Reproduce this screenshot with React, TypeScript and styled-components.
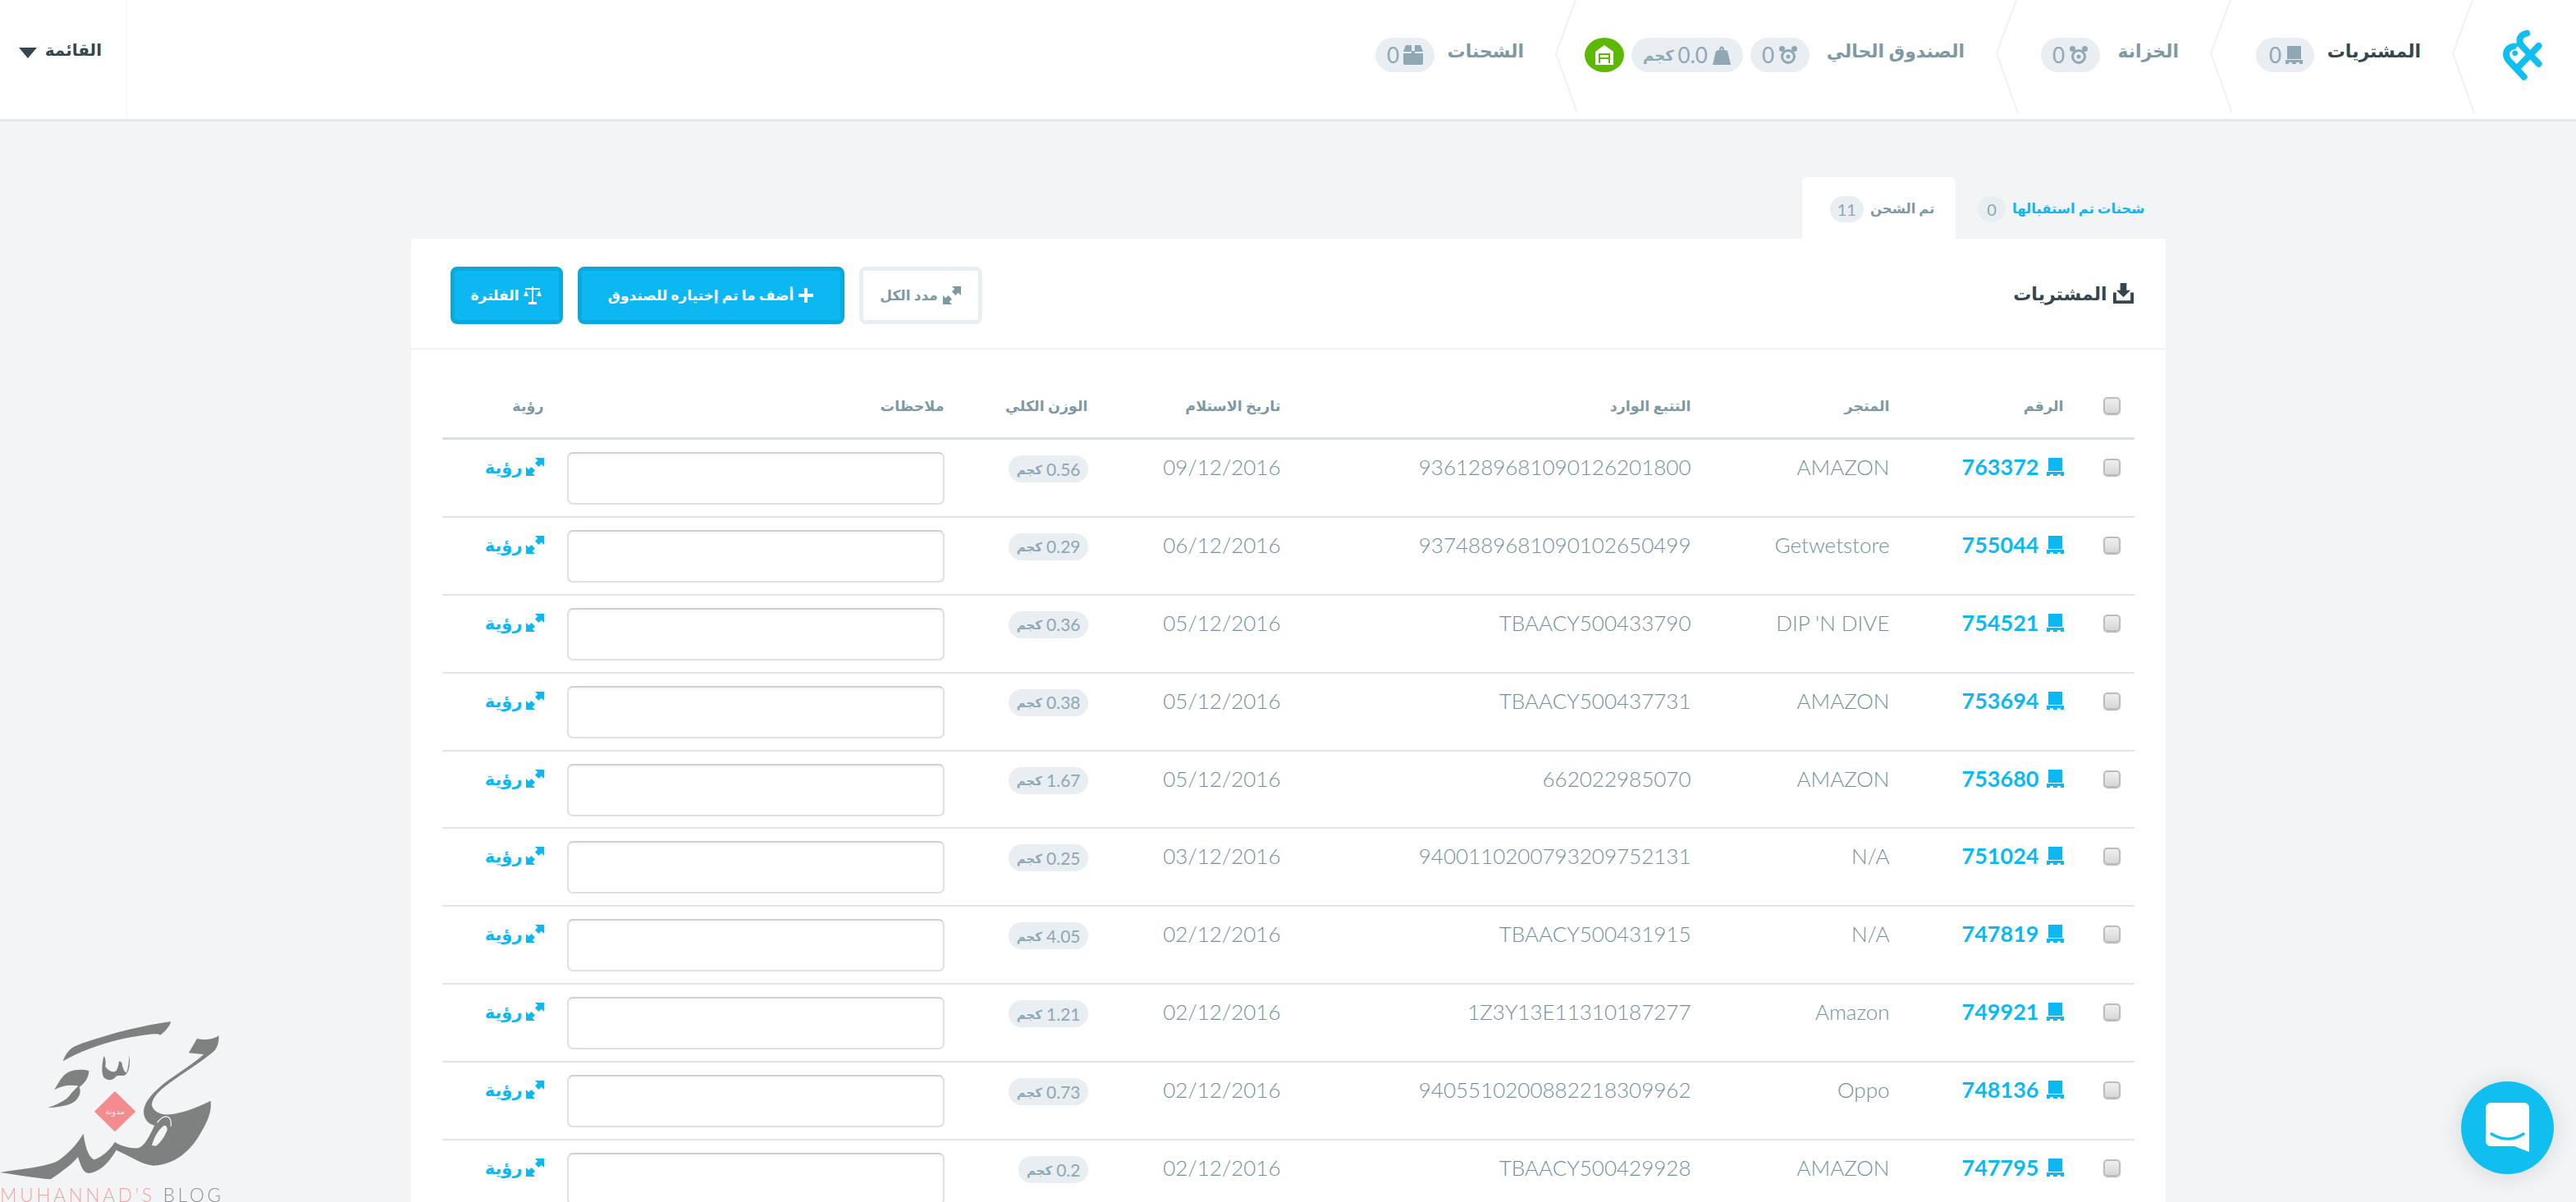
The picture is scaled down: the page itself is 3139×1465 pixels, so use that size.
import React from "react";
import styled, { createGlobalStyle } from "styled-components";

const Global = createGlobalStyle`
  html, body { margin: 0; padding: 0; height: 100%; overflow: hidden; background: #f2f4f6; }
  body { font-family: "Lato", "DejaVu Sans", sans-serif; color: #8fa3ac; }
  * { box-sizing: border-box; }
`;

const Page = styled.div`
  direction: rtl;
  width: 3139px;
  height: 1465px;
  overflow: hidden;
`;

const Header = styled.header`
  display: flex;
  height: 148px;
  background: #fff;
  border-bottom: 3px solid #e6e9ec;
`;

const LogoCell = styled.div`
  width: 150px;
  display: flex;
  align-items: center;
  justify-content: center;
  padding: 0 0 12px 18px;
  flex: none;
`;

const NavItem = styled.div<{ $w: number }>`
  position: relative;
  flex: none;
  width: ${(p) => p.$w}px;
  height: 145px;
  display: flex;
  align-items: flex-start;
  padding: 46px 39px 0 0;
`;

const Chevron = styled.svg`
  position: absolute;
  right: -28px;
  top: 0;
  width: 30px;
  height: 140px;
`;

const NavLabel = styled.span<{ $active?: boolean; $w: number }>`
  width: ${(p) => p.$w}px;
  flex: none;
  font-size: 22px;
  font-weight: 700;
  line-height: 32px;
  white-space: nowrap;
  color: ${(p) => (p.$active ? "#34464e" : "#7f99a3")};
`;

const Pills = styled.div`
  display: flex;
  gap: 9px;
  margin-right: 18px;
`;

const Pill = styled.span`
  height: 42px;
  min-width: 71px;
  padding: 0 14px;
  border-radius: 21px;
  background: #e8eef1;
  color: #8fa8b3;
  display: inline-flex;
  align-items: center;
  gap: 5px;
  font-size: 26px;
  white-space: nowrap;
  & small { font-size: 18px; font-weight: 700; }
`;

const GreenPill = styled.span`
  width: 48px;
  height: 42px;
  border-radius: 50%;
  background: #5cb900;
  display: inline-flex;
  align-items: center;
  justify-content: center;
`;

const Spacer = styled.div`
  flex: 1;
`;

const MenuCell = styled.div`
  flex: none;
  width: 155px;
  height: 143px;
  border-right: 2px solid #f6f7f8;
  display: flex;
  align-items: flex-start;
  gap: 10px;
  padding: 44px 29px 0 0;
  font-size: 20px;
  font-weight: 700;
  line-height: 32px;
  color: #34464e;
  white-space: nowrap;
`;

const Caret = styled.span`
  margin-top: 14px;
  width: 0;
  height: 0;
  border-left: 11px solid transparent;
  border-right: 11px solid transparent;
  border-top: 13px solid #34464e;
`;

const Main = styled.main`
  width: 2138px;
  margin: 68px auto 0;
`;

const Tabs = styled.div`
  display: flex;
  height: 75px;
  position: relative;
  z-index: 1;
`;

const Tab = styled.div<{ $active?: boolean; $w: number }>`
  width: ${(p) => p.$w}px;
  height: ${(p) => (p.$active ? 78 : 75)}px;
  padding: 23px 25px 0 0;
  display: flex;
  align-items: flex-start;
  gap: 8px;
  font-size: 16.5px;
  font-weight: 700;
  line-height: 30px;
  white-space: nowrap;
  border-radius: 6px 6px 0 0;
  background: ${(p) => (p.$active ? "#fff" : "transparent")};
  color: ${(p) => (p.$active ? "#7f99a3" : "#0db8f2")};
`;

const TabCount = styled.span`
  height: 32px;
  min-width: 34px;
  padding: 0 9px;
  border-radius: 16px;
  background: #e8eef1;
  color: #8fa8b3;
  font-size: 20px;
  font-weight: 400;
  line-height: 32px;
  text-align: center;
`;

const Card = styled.section`
  background: #fff;
  height: 1300px;
`;

const CardHead = styled.div`
  height: 135px;
  border-bottom: 2px solid #f1f3f5;
  display: flex;
  align-items: center;
  justify-content: space-between;
  padding: 0 38px 0 48px;
`;

const Title = styled.h2`
  margin: 0;
  display: flex;
  align-items: center;
  gap: 6px;
  font-size: 22px;
  font-weight: 700;
  color: #34464e;
  white-space: nowrap;
`;

const Actions = styled.div`
  display: flex;
  gap: 18px;
  margin-top: 4px;
`;

const Btn = styled.button<{ $w: number; $outline?: boolean }>`
  width: ${(p) => p.$w}px;
  height: 70px;
  border-radius: 8px;
  border: 5px solid ${(p) => (p.$outline ? "#e9eef1" : "#0ba8dc")};
  background: ${(p) => (p.$outline ? "#fff" : "#0db8f2")};
  color: ${(p) => (p.$outline ? "#7f99a3" : "#fff")};
  font-family: inherit;
  font-size: 17px;
  font-weight: 700;
  display: inline-flex;
  align-items: center;
  justify-content: center;
  gap: 6px;
  padding: 0;
  white-space: nowrap;
`;

const COLS = "86px 212px 242px 500px 235px 175px 488px 124px";

const Table = styled.div`
  margin: 0 38px;
  padding-top: 24px;
`;

const HeadRow = styled.div`
  display: grid;
  grid-template-columns: ${COLS};
  height: 86px;
  align-items: center;
  padding-top: 6px;
  border-bottom: 3px solid #dcdfe1;
  font-size: 17.5px;
  font-weight: 700;
  color: #7f99a3;
  white-space: nowrap;
`;

const Row = styled.div`
  display: grid;
  grid-template-columns: ${COLS};
  height: 94.9px;
  align-items: start;
  border-bottom: 2px solid #e2e4e5;
`;

const Cell = styled.div`
  padding-top: 13px;
  font-size: 26px;
  font-weight: 300;
  line-height: 40px;
  color: #73909b;
  white-space: nowrap;
  direction: rtl;
`;

const BoxCell = styled.div`
  display: flex;
  justify-content: flex-start;
  padding: 0 17px 0 0;
`;

const BoxCellRow = styled(BoxCell)`
  padding-top: 23px;
`;

const Check = styled.input.attrs({ type: "checkbox" })`
  appearance: none;
  margin: 0;
  width: 21px;
  height: 21px;
  border: 2px solid #bbbcbd;
  border-radius: 5px;
  background: linear-gradient(#efefef, #d7d7d7);
  box-shadow: 0 1px 1px rgba(0, 0, 0, 0.3);
`;

const NumCell = styled(Cell)`
  color: #0db8f2;
  font-size: 27px;
  font-weight: 700;
  display: flex;
  align-items: center;
  gap: 9px;
`;

const WeightPill = styled.span`
  display: inline-flex;
  align-items: center;
  gap: 5px;
  height: 33px;
  margin-top: 6px;
  padding: 0 9px 0 10px;
  border-radius: 16px;
  background: #e8eef1;
  color: #8fa8b3;
  font-size: 21px;
  font-weight: 400;
  & small { font-size: 15px; font-weight: 700; }
`;

const NoteInput = styled.input`
  display: block;
  width: 460px;
  height: 64px;
  margin-top: 15px;
  border: 2px solid #e0e0e0;
  border-top-color: #d0d0d0;
  border-radius: 7px;
  background: #fff;
  box-shadow: inset 0 2px 3px rgba(0, 0, 0, 0.04);
`;

const ViewLink = styled(Cell)`
  color: #0db8f2;
  font-size: 21px;
  font-weight: 700;
  display: flex;
  align-items: center;
  gap: 4px;
`;

const Watermark = styled.div`
  position: fixed;
  left: 0;
  bottom: 0;
  width: 300px;
  height: 245px;
  direction: ltr;
`;

const WatermarkText = styled.div`
  position: absolute;
  left: 0;
  top: 228px;
  font-family: "Lato", sans-serif;
  font-weight: 300;
  font-size: 22.5px;
  line-height: 17px;
  letter-spacing: 3.8px;
  color: #f6a0a4;
  white-space: nowrap;
  & b { font-weight: 300; color: #8f9293; }
`;

const DiamondText = styled.text`
  font-family: "DejaVu Sans", sans-serif;
  font-size: 30px;
  fill: #fff;
`;

const Chat = styled.div`
  position: fixed;
  left: 2999px;
  top: 1318px;
  width: 113px;
  height: 113px;
  border-radius: 50%;
  background: #10bff0;
  box-shadow: 0 2px 30px rgba(0, 0, 0, 0.12);
  display: flex;
  align-items: center;
  justify-content: center;
`;

const ChevronLine = () => (
  <Chevron viewBox="0 0 30 140">
    <path d="M26 0 L2 65 L28 138" fill="none" stroke="#edf2f3" strokeWidth="2" />
  </Chevron>
);

const C = "currentColor";
const CartIcon = () => (
  <svg width="21" height="22" viewBox="0 0 21 22" fill={C}>
    <path d="M2 0h17v16H2zM0 17h21v5h-4v-2h-4v2H8v-2H4v2H0z" />
  </svg>
);
const BearIcon = () => (
  <svg width="24" height="24" viewBox="0 0 24 24" fill="none" stroke={C}>
    <circle cx="12" cy="14" r="7.5" strokeWidth="3" />
    <circle cx="12" cy="14" r="2.5" fill={C} stroke="none" />
    <circle cx="4.5" cy="4.5" r="3.5" fill={C} stroke="none" />
    <circle cx="19.5" cy="4.5" r="3.5" fill={C} stroke="none" />
  </svg>
);
const WeightIcon = () => (
  <svg width="24" height="26" viewBox="0 0 24 26" fill={C}>
    <path d="M9 7 C9 1 15 1 15 7 L19 8 L23 25 H1 L5 8 Z M11 7 H13 C13 4.5 11 4.5 11 7Z" fillRule="evenodd" />
  </svg>
);
const BoxIcon = () => (
  <svg width="24" height="24" viewBox="0 0 24 24" fill={C}>
    <path d="M3 0h7v8H0zM14 0h7l3 8H14zM0 10h10V7h4v3h10v12a2 2 0 0 1-2 2H2a2 2 0 0 1-2-2z" />
  </svg>
);
const HouseIcon = () => (
  <svg width="22" height="24" viewBox="0 0 22 24" fill="#fff">
    <path d="M11 0 L22 8 V24 H0 V8Z M4 10 V22 H6 V17 H16 V22 H18 V10Z M6 12 H16 V15 H6Z" fillRule="evenodd" />
  </svg>
);
const ExpandIcon = () => (
  <svg width="22" height="22" viewBox="0 0 20 20" fill={C}>
    <path d="M10 0h10v10l-3-3-3 3-4-4 3-3zM0 10l3 3 3-3 4 4-3 3 3 3H0z" />
  </svg>
);
const PlusIcon = () => (
  <svg width="18" height="18" viewBox="0 0 18 18" fill="#fff">
    <path d="M7 0h4v7h7v4h-7v7H7v-7H0V7h7z" />
  </svg>
);
const ScaleIcon = () => (
  <svg width="22" height="22" viewBox="0 0 22 22" fill="#fff">
    <path d="M10 0h2v2h8v2h-8v15h4v3H6v-3h4V4H2V2h8z" />
    <path d="M3 5 L6 12 H0Z M19 5 L22 12 H16Z" />
  </svg>
);
const DownloadIcon = () => (
  <svg width="27" height="25" viewBox="0 0 28 26" fill="#34464e">
    <path d="M10 0h8v9h5l-9 9-9-9h5z" />
    <path d="M1 12h4v10h18V12h4v14H1z" />
  </svg>
);

const rows = [
  ["763372", "AMAZON", "9361289681090126201800", "09/12/2016", "0.56"],
  ["755044", "Getwetstore", "9374889681090102650499", "06/12/2016", "0.29"],
  ["754521", "DIP 'N DIVE", "TBAACY500433790", "05/12/2016", "0.36"],
  ["753694", "AMAZON", "TBAACY500437731", "05/12/2016", "0.38"],
  ["753680", "AMAZON", "662022985070", "05/12/2016", "1.67"],
  ["751024", "N/A", "9400110200793209752131", "03/12/2016", "0.25"],
  ["747819", "N/A", "TBAACY500431915", "02/12/2016", "4.05"],
  ["749921", "Amazon", "1Z3Y13E11310187277", "02/12/2016", "1.21"],
  ["748136", "Oppo", "9405510200882218309962", "02/12/2016", "0.73"],
  ["747795", "AMAZON", "TBAACY500429928", "02/12/2016", "0.2"],
];

export default function App() {
  return (
    <Page>
      <Global />
      <Header>
        <LogoCell>
          <svg width="60" height="73" viewBox="130 90 180 220" fill="none" stroke="#10bfef" strokeWidth="24" strokeLinecap="round">
            <path d="M238 122 C212 128 205 148 220 168 L282 234" />
            <path d="M282 168 L205 248" />
            <path d="M188 170 C162 176 155 200 172 222 L228 282" />
            <path d="M188 170 L212 160" strokeWidth="14" />
            <circle cx="195" cy="195" r="10" fill="#10bfef" stroke="none" />
          </svg>
        </LogoCell>
        <NavItem $w={295}>
          <ChevronLine />
          <NavLabel $active $w={112}>المشتريات</NavLabel>
          <Pills><Pill><CartIcon />0</Pill></Pills>
        </NavItem>
        <NavItem $w={261}>
          <ChevronLine />
          <NavLabel $w={78}>الخزانة</NavLabel>
          <Pills><Pill><BearIcon />0</Pill></Pills>
        </NavItem>
        <NavItem $w={537}>
          <ChevronLine />
          <NavLabel $w={171}>الصندوق الحالي</NavLabel>
          <Pills>
            <Pill><BearIcon />0</Pill>
            <Pill><WeightIcon />0.0 <small>كجم</small></Pill>
            <GreenPill><HouseIcon /></GreenPill>
          </Pills>
        </NavItem>
        <NavItem $w={300}>
          <ChevronLine />
          <NavLabel $w={91}>الشحنات</NavLabel>
          <Pills><Pill><BoxIcon />0</Pill></Pills>
        </NavItem>
        <Spacer />
        <MenuCell>
          القائمة
          <Caret />
        </MenuCell>
      </Header>

      <Main>
        <Tabs>
          <Tab $w={256}>شحنات تم استقبالها<TabCount>0</TabCount></Tab>
          <Tab $active $w={187}>تم الشحن<TabCount>11</TabCount></Tab>
        </Tabs>
        <Card>
          <CardHead>
            <Title><DownloadIcon />المشتريات</Title>
            <Actions>
              <Btn $outline $w={150}><ExpandIcon />مدد الكل</Btn>
              <Btn $w={325}><PlusIcon />أضف ما تم إختياره للصندوق</Btn>
              <Btn $w={137}><ScaleIcon />الفلترة</Btn>
            </Actions>
          </CardHead>
          <Table>
            <HeadRow>
              <BoxCell><Check /></BoxCell>
              <div>الرقم</div>
              <div>المتجر</div>
              <div>التتبع الوارد</div>
              <div>تاريخ الاستلام</div>
              <div>الوزن الكلي</div>
              <div>ملاحظات</div>
              <div>رؤية</div>
            </HeadRow>
            {rows.map((r) => (
              <Row key={r[0]}>
                <BoxCellRow><Check /></BoxCellRow>
                <NumCell><CartIcon />{r[0]}</NumCell>
                <Cell>{r[1]}</Cell>
                <Cell>{r[2]}</Cell>
                <Cell>{r[3]}</Cell>
                <Cell><WeightPill>{r[4]} <small>كجم</small></WeightPill></Cell>
                <div><NoteInput /></div>
                <ViewLink><ExpandIcon />رؤية</ViewLink>
              </Row>
            ))}
          </Table>
        </Card>
      </Main>

      <Watermark>
        <svg width="300" height="245" viewBox="0 0 900 735" fill="#7f8180">
          <path d="M230 220 C250 170 270 165 330 145 C420 115 520 90 625 75 C620 95 600 115 585 125 C580 115 520 125 440 140 C360 160 290 185 230 220Z" />
          <path d="M380 200 C386 210 388 225 385 240 C395 255 415 265 425 255 C432 245 435 225 435 220 L445 225 C448 245 455 260 462 262 C470 245 472 215 472 195 C478 235 470 265 455 272 C440 275 430 270 425 275 C410 295 390 290 380 280 C370 265 372 230 380 200Z" />
          <path d="M198 325 C215 300 225 270 255 258 C275 250 305 250 325 255 C325 280 310 300 290 315 C300 335 285 365 260 375 C235 385 200 390 175 390 C205 380 240 365 255 345 C270 325 285 315 285 310 C250 305 225 310 198 325Z" />
          <path d="M770 365 C775 400 760 440 735 480 C700 545 640 600 560 602 C520 598 470 565 425 545 C405 580 370 625 325 630 C305 628 298 610 285 570 C260 600 225 625 185 652 C130 648 60 635 0 627 C70 615 150 610 205 588 C245 565 280 525 305 485 C310 520 320 570 345 580 C375 570 405 540 420 515 C440 530 480 540 505 538 C530 530 545 495 565 455 C540 450 525 430 525 402 C530 365 555 340 595 305 C640 270 700 235 745 195 L690 190 L720 138 C750 145 780 140 800 127 C800 155 795 175 775 190 C720 235 650 275 600 315 C570 340 555 360 555 380 C560 405 590 418 620 415 C670 410 730 385 770 365Z" />
          <path d="M555 528 C565 490 585 465 600 455 C612 455 612 470 610 475 C600 500 585 520 570 530Z" fill="#f2f4f6" />
          <path d="M575 445 C590 425 605 420 615 425 C625 430 626 445 625 458" fill="none" stroke="#f2f4f6" strokeWidth="4" />
          <path d="M420 330 L496 404 L420 478 L345 404Z" fill="#f48b8f" />
          <DiamondText x="420" y="414" textAnchor="middle" direction="rtl">مدونة</DiamondText>
        </svg>
        <WatermarkText>MUHANNAD'S <b>BLOG</b></WatermarkText>
      </Watermark>

      <Chat>
        <svg width="54" height="62" viewBox="0 0 54 62">
          <path d="M6 0 H47 A6 6 0 0 1 53 6 V60 L35 53 H6 A6 6 0 0 1 0 47 V6 A6 6 0 0 1 6 0Z" fill="#fff" />
          <path d="M7 38 C20 46 34 46 46 38" stroke="#10bfef" strokeWidth="3.5" fill="none" strokeLinecap="round" />
        </svg>
      </Chat>
    </Page>
  );
}
